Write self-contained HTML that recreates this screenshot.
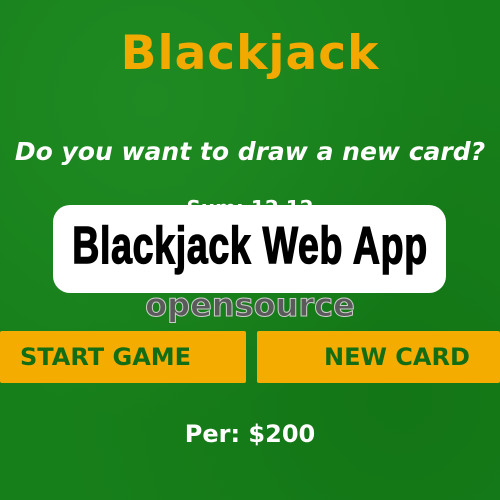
<!DOCTYPE html>
<html><head><style>
html,body{margin:0;padding:0}
body{width:500px;height:500px;overflow:hidden;position:relative;background:#177f1a;
background-image:radial-gradient(circle at 30% 20%,#1f8a22 0,transparent 60%),radial-gradient(circle at 80% 80%,#137516 0,transparent 60%);
font-family:"Liberation Sans","DejaVu Sans",sans-serif}
.t{position:absolute;left:0;width:500px;text-align:center;white-space:nowrap}
#title{top:26px;font-size:47px;font-weight:bold;color:#f2a900;font-family:"DejaVu Sans",sans-serif;letter-spacing:1px}
#q{top:137px;font-size:25px;color:#fff;font-weight:bold;font-style:italic;font-family:"DejaVu Sans",sans-serif}
#sum{top:196px;font-size:20px;color:#fff;font-weight:bold;font-family:"DejaVu Sans",sans-serif}
#box{position:absolute;left:53px;top:205px;width:393px;height:88px;background:#fff;border-radius:17px}
#bt{position:absolute;left:0;top:216px;width:500px;text-align:center;font-size:52px;font-weight:bold;color:#000;-webkit-text-stroke:1.5px #000;transform:scaleX(0.72);letter-spacing:1px;white-space:nowrap}
#os{top:286px;font-size:32px;font-weight:bold;color:#5a5a5a;font-family:"DejaVu Sans",sans-serif;-webkit-text-stroke:1px #ccc}
.b{position:absolute;top:331px;height:52px;background:#f5ac00;color:#136d15;font-size:24px;font-weight:bold;font-family:"DejaVu Sans",sans-serif;line-height:52px;border-radius:2px}
#per{top:420px;font-size:24px;color:#fff;font-weight:bold;font-family:"DejaVu Sans",sans-serif}
</style></head><body>
<div class="t" id="title">Blackjack</div>
<div class="t" id="q">Do you want to draw a new card?</div>
<div class="t" id="sum">Sum: 12 12</div>
<div id="box"></div>
<div id="bt">Blackjack Web App</div>
<div class="t" id="os">opensource</div>
<div class="b" style="left:0;width:246px;padding-left:20px;box-sizing:border-box">START GAME</div>
<div class="b" style="left:257px;width:243px;padding-left:67px;box-sizing:border-box">NEW CARD</div>
<div class="t" id="per">Per: $200</div>
</body></html>
